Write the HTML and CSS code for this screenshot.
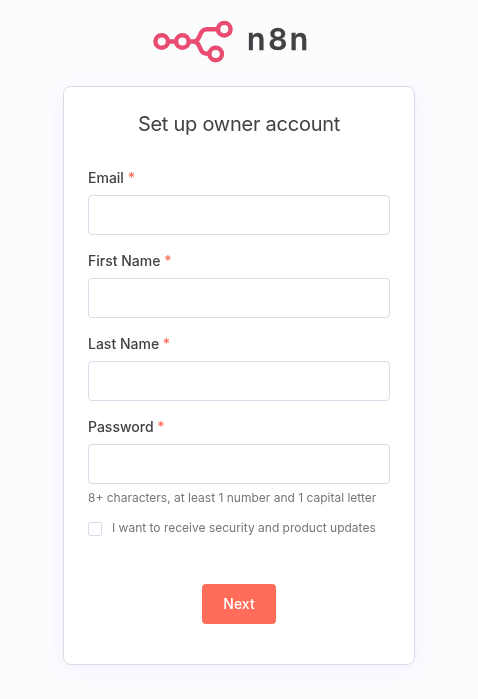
FILE: index.html
```html
<!DOCTYPE html>
<html lang="en">
<head>
<meta charset="utf-8">
<title>n8n</title>
<link rel="stylesheet" href="styles.css">
</head>
<body>
<main class="auth">
  <svg class="logo" width="158" height="46" viewBox="0 0 158 46" role="img" aria-label="n8n">
    <g class="mark">
      <circle cx="8.7" cy="22.5" r="6.3"/>
      <circle cx="29.4" cy="22.5" r="6.3"/>
      <circle cx="71.3" cy="10.2" r="6.3"/>
      <circle cx="62.7" cy="35" r="6.3"/>
      <path d="M15 22.500H23.200M35.600 22.500H40.500C48.500 22.500 45 10.200 54 10.200H65.100M40.500 22.500C48.500 22.500 45 34.800 54 34.800H56.500"/>
    </g>
    <text class="wordmark" x="94 115.200 136.700" y="30.800">n8n</text>
  </svg>
  <form class="card">
    <h1 class="title">Set up owner account</h1>
    <div class="field">
      <label class="label" for="email">Email <span class="required">*</span></label>
      <input class="input" id="email" type="email">
    </div>
    <div class="field">
      <label class="label" for="first">First Name <span class="required">*</span></label>
      <input class="input" id="first" type="text">
    </div>
    <div class="field">
      <label class="label" for="last">Last Name <span class="required">*</span></label>
      <input class="input" id="last" type="text">
    </div>
    <div class="field">
      <label class="label" for="password">Password <span class="required">*</span></label>
      <input class="input" id="password" type="password">
      <p class="hint">8+ characters, at least 1 number and 1 capital letter</p>
    </div>
    <label class="agree"><input class="checkbox" type="checkbox"><span>I want to receive security and product updates</span></label>
    <button class="button" type="button">Next</button>
  </form>
</main>
</body>
</html>
```
FILE: styles.css
```css
* { box-sizing: border-box; }
body {
  margin: 0;
  min-height: 699px;
  background: #fbfcfe;
  color: #414244;
  font-family: Inter, "Open Sans", sans-serif;
}
.auth {
  display: flex;
  flex-direction: column;
  align-items: center;
  padding-top: 19px;
  will-change: transform;
}
.logo { display: block; margin-right: 14px; overflow: visible; }
.mark { fill: none; stroke: #ea4b71; stroke-width: 4.4; }
.wordmark {
  fill: #414244;
  stroke: #414244;
  stroke-width: 0.3px;
  font-size: 30px;
  font-weight: 600;
}
.card {
  display: flex;
  flex-direction: column;
  width: 352px;
  height: 579px;
  margin-top: 21px;
  padding: 24px;
  background: #fff;
  border: 1px solid #d9dce8;
  border-radius: 8px;
  box-shadow: 0 4px 16px rgba(99, 77, 255, 0.06);
}
.title {
  margin: 1px 0 31px;
  font-size: 20px;
  font-weight: 400;
  line-height: 25px;
  letter-spacing: -0.25px;
  text-align: center;
}
.field { display: flex; flex-direction: column; margin-bottom: 16px; }
.label {
  height: 27px;
  font-size: 14px;
  font-weight: 500;
  line-height: 19px;
}
.required { color: #ff6d5a; }
.input {
  width: 100%;
  height: 40px;
  margin: 0;
  padding: 0 12px;
  border: 1px solid #d9dce8;
  border-radius: 4px;
  background: #fff;
}
.hint {
  margin: 4px 0 0;
  color: #75767a;
  font-size: 12px;
  line-height: 20px;
}
.agree {
  display: flex;
  align-items: center;
  gap: 10px;
  height: 16px;
  margin-top: -4px;
  color: #75767a;
  font-size: 12px;
  line-height: 16px;
}
.checkbox {
  appearance: none;
  width: 14px;
  height: 14px;
  margin: 2px 0 0;
  border: 1px solid #d9dce8;
  border-radius: 2px;
  background: #fff;
}
.button {
  align-self: center;
  width: 74px;
  height: 40px;
  margin-top: 48px;
  padding: 0 0 2px;
  border: 0;
  border-radius: 4px;
  background: #ff6d5a;
  color: #fff;
  font: 500 14px Inter, sans-serif;
}
```
